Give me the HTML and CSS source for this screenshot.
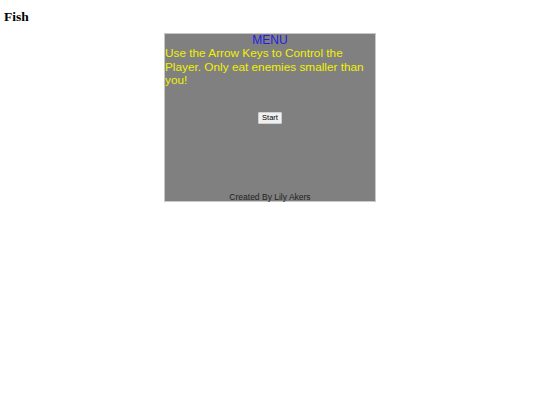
FILE: index.html
```html
<!DOCTYPE html>
<html>
<head>
<meta charset="utf-8">
<link rel="stylesheet" href="styles.css">
</head>
<body>
<h1 class="title">Fish</h1>
<div class="game">
  <div class="menu">MENU</div>
  <p class="instructions">Use the Arrow Keys to Control the Player. Only eat enemies smaller than you!</p>
  <div class="start-row"><button class="start">Start</button></div>
  <div class="credit">Created By Lily Akers</div>
</div>
</body>
</html>
```
FILE: styles.css
```css
html, body { margin: 0; padding: 0; background: #fff; }
body { font-family: "Liberation Sans", Arial, sans-serif; }
.title {
  font-family: "Liberation Serif", "Times New Roman", serif;
  font-weight: bold;
  font-size: 13.5px;
  line-height: 16px;
  margin: 9px 0 0 4px;
}
.game {
  box-sizing: border-box;
  width: 212px;
  height: 169px;
  margin: 8px auto 0;
  background: #808080;
  border: 1px solid #c8c8c8;
  display: flex;
  flex-direction: column;
}
.menu {
  color: #2020e0;
  text-align: center;
  font-size: 12px;
  line-height: 13.4px;
}
.instructions {
  color: #f0f000;
  font-size: 11.8px;
  line-height: 13.4px;
  margin: 0;
}
.start-row {
  display: flex;
  justify-content: center;
  margin-top: 24px;
}
.start {
  font-family: "Liberation Sans", Arial, sans-serif;
  font-size: 7.5px;
  line-height: 9px;
  padding: 0 3px 1px;
  background: #f0f0f0;
  border: 1px solid #d0d0d0;
  border-radius: 1px;
  color: #000;
}
.credit {
  margin-top: auto;
  text-align: center;
  font-size: 8.5px;
  line-height: 8px;
  color: #222;
}
```
